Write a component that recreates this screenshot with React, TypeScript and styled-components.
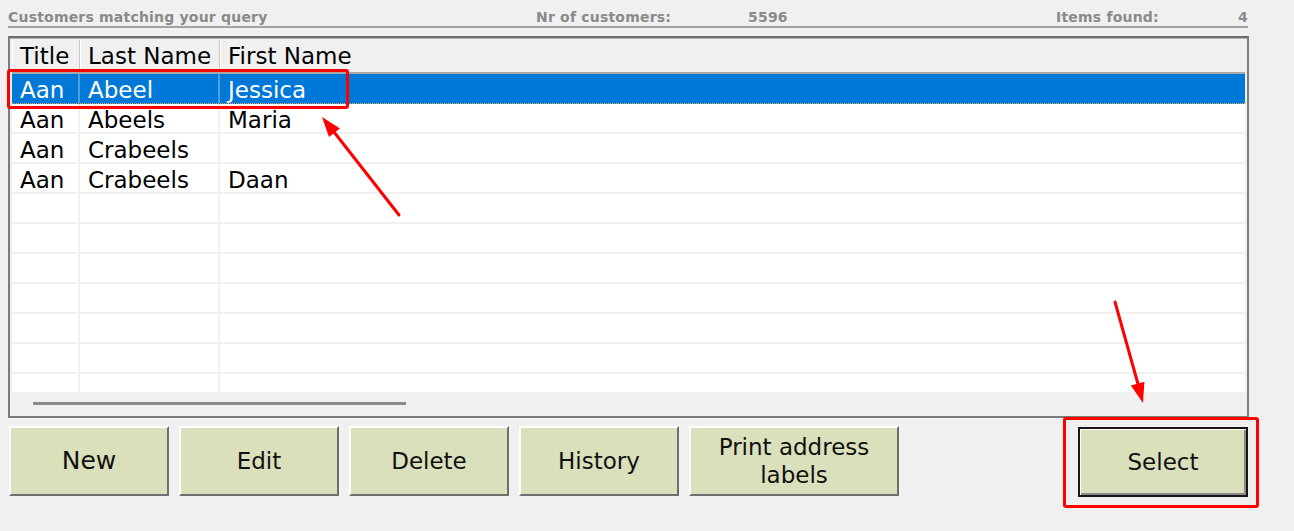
import React from "react";
import styled, { createGlobalStyle } from "styled-components";

const GlobalStyle = createGlobalStyle`
  html, body {
    margin: 0;
    padding: 0;
    background: #f0f0f0;
    font-family: "DejaVu Sans", Verdana, sans-serif;
  }
`;

const Page = styled.div`
  position: relative;
  width: 1294px;
  height: 531px;
  padding-left: 8px;
  box-sizing: border-box;
  overflow: hidden;
`;

const SummaryBar = styled.div`
  width: 1240px;
  height: 25px;
  border-bottom: 2px solid #a3a3a3;
  display: grid;
  grid-template-columns: 528px 212px 308px 1fr;
  align-items: end;
  padding-bottom: 1px;
  box-sizing: content-box;
  font-weight: bold;
  font-size: 14px;
  letter-spacing: 0.2px;
  color: #8a8a8a;
`;

const SummaryEnd = styled.div`
  display: flex;
  justify-content: space-between;
`;

const ListFrame = styled.div`
  margin-top: 8px;
  width: 1241px;
  box-sizing: border-box;
  border: 2px solid #7c7c7c;
  border-top-color: #6e6e6e;
  padding: 2px;
  background: #f0f0f0;
  box-shadow: inset 0 1px 0 #b4b4b4;
`;

const HeaderRow = styled.div`
  display: grid;
  grid-template-columns: 68px 140px 1fr;
  height: 34px;
  box-sizing: border-box;
  border-bottom: 2px solid #a8a8a8;
  background: #f0f0f0;
`;

const HeaderCell = styled.div`
  font-size: 23px;
  color: #000;
  padding-left: 8px;
  line-height: 32px;
  white-space: nowrap;
  border-right: 1px solid #c9c9c9;
  box-shadow: inset 1px 0 0 #ffffff;
  &:last-child {
    border-right: none;
  }
`;

const RowArea = styled.div`
  height: 318px;
  overflow: hidden;
  background: #ffffff;
`;

const Row = styled.div<{ $selected?: boolean }>`
  display: grid;
  grid-template-columns: 68px 140px 1fr;
  height: 30px;
  box-sizing: border-box;
  background: ${(p) => (p.$selected ? "#0078d7" : "#ffffff")};
  color: ${(p) => (p.$selected ? "#ffffff" : "#000000")};
  border-bottom: ${(p) => (p.$selected ? "1px dotted #d9a066" : "2px solid #f0f0f0")};
`;

const Cell = styled.div<{ $selected?: boolean }>`
  font-size: 23px;
  padding-left: 8px;
  padding-top: 3px;
  line-height: 26px;
  white-space: nowrap;
  overflow: hidden;
  border-right: 2px solid ${(p) => (p.$selected ? "#4f9ee0" : "#f0f0f0")};
  &:last-child {
    border-right: none;
  }
`;

const ScrollTrack = styled.div`
  height: 22px;
  display: flex;
  align-items: center;
  padding-left: 21px;
  background: #f0f0f0;
`;

const ScrollThumb = styled.div`
  width: 373px;
  height: 3px;
  background: #8a8a8a;
`;

const ButtonBar = styled.div`
  margin-top: 8px;
  width: 1240px;
  display: flex;
  gap: 10px;
  padding-left: 1px;
  box-sizing: border-box;
  align-items: flex-start;
`;

const ActionButton = styled.button<{ $wide?: boolean; $large?: boolean }>`
  width: ${(p) => (p.$wide ? "210px" : "160px")};
  height: 70px;
  background: #dae0bb;
  font-family: "DejaVu Sans", Verdana, sans-serif;
  font-size: ${(p) => (p.$large ? "25px" : "23px")};
  line-height: 28px;
  color: #111;
  padding: 0 4px;
  box-sizing: border-box;
  border-style: solid;
  border-width: 2px;
  border-color: #ffffff #6f6f6f #6f6f6f #ffffff;
  cursor: pointer;
`;

const DefaultButton = styled(ActionButton)`
  margin-left: auto;
  margin-top: 1px;
  width: 170px;
  border: 2px solid #1c1414;
  box-shadow: inset 1px 1px 0 #ffffff, inset -2px -2px 0 #8a8a8a;
`;

const Highlight = styled.div<{ $x: number; $y: number; $w: number; $h: number }>`
  position: absolute;
  left: ${(p) => p.$x}px;
  top: ${(p) => p.$y}px;
  width: ${(p) => p.$w}px;
  height: ${(p) => p.$h}px;
  border: 3px solid #ff0000;
  border-radius: 3px;
  box-sizing: border-box;
  pointer-events: none;
`;

const Overlay = styled.svg`
  position: absolute;
  left: 0;
  top: 0;
  pointer-events: none;
`;

const customers = [
  { title: "Aan", last: "Abeel", first: "Jessica" },
  { title: "Aan", last: "Abeels", first: "Maria" },
  { title: "Aan", last: "Crabeels", first: "" },
  { title: "Aan", last: "Crabeels", first: "Daan" },
];

const EMPTY_ROWS = 7;

const App: React.FC = () => {
  return (
    <>
      <GlobalStyle />
      <Page>
        <SummaryBar>
          <span>Customers matching your query</span>
          <span>Nr of customers:</span>
          <span>5596</span>
          <SummaryEnd>
            <span>Items found:</span>
            <span>{customers.length}</span>
          </SummaryEnd>
        </SummaryBar>

        <ListFrame>
          <HeaderRow>
            <HeaderCell>Title</HeaderCell>
            <HeaderCell>Last Name</HeaderCell>
            <HeaderCell>First Name</HeaderCell>
          </HeaderRow>
          <RowArea>
            {customers.map((c, index) => {
              const selected = index === 0;
              return (
                <Row key={index} $selected={selected}>
                  <Cell $selected={selected}>{c.title}</Cell>
                  <Cell $selected={selected}>{c.last}</Cell>
                  <Cell $selected={selected}>{c.first}</Cell>
                </Row>
              );
            })}
            {Array.from({ length: EMPTY_ROWS }).map((_, index) => (
              <Row key={"empty" + index}>
                <Cell />
                <Cell />
                <Cell />
              </Row>
            ))}
          </RowArea>
          <ScrollTrack>
            <ScrollThumb />
          </ScrollTrack>
        </ListFrame>

        <ButtonBar>
          <ActionButton $large>New</ActionButton>
          <ActionButton>Edit</ActionButton>
          <ActionButton>Delete</ActionButton>
          <ActionButton>History</ActionButton>
          <ActionButton $wide>Print address labels</ActionButton>
          <DefaultButton>Select</DefaultButton>
        </ButtonBar>

        {/* annotations drawn over the screenshot */}
        <Highlight $x={7} $y={69} $w={342} $h={40} />
        <Highlight $x={1063} $y={417} $w={196} $h={91} />
        <Overlay width={1294} height={531}>
          <line x1={399} y1={215} x2={334} y2={132} stroke="#ff0000" strokeWidth={3} strokeLinecap="round" />
          <polygon points="322,117 340,128.4 329,137" fill="#ff0000" />
          <line x1={1115} y1={302} x2={1138} y2={384} stroke="#ff0000" strokeWidth={3} strokeLinecap="round" />
          <polygon points="1143,403 1144.4,381.8 1130.9,385.6" fill="#ff0000" />
        </Overlay>
      </Page>
    </>
  );
};

export default App;
